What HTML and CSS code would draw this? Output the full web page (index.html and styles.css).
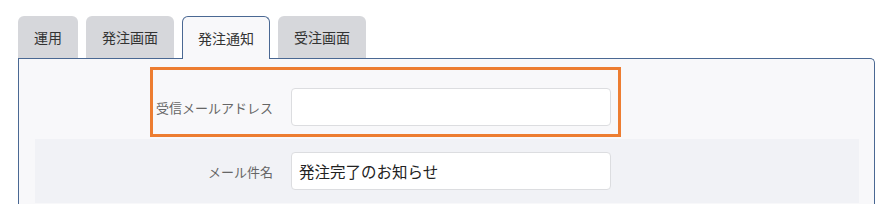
FILE: index.html
```html
<!DOCTYPE html>
<html lang="ja">
<head>
  <meta charset="UTF-8" />
  <title>設定</title>
  <link rel="stylesheet" href="styles.css">
</head>
<body>
  <div class="tabs">
    <div class="tab">運用</div>
    <div class="tab">発注画面</div>
    <div class="tab active">発注通知</div>
    <div class="tab">受注画面</div>
  </div>

  <div class="panel">
    <div class="row">
      <div class="highlight"></div>
      <label class="label">受信メールアドレス</label>
      <input class="field" type="text" value="">
    </div>
    <div class="row alt">
      <label class="label">メール件名</label>
      <input class="field" type="text" value="発注完了のお知らせ">
    </div>
  </div>
</body>
</html>
```

FILE: styles.css
```css
body {
  margin: 0;
  padding: 16px 14px 0 18px;
  background-color: #ffffff;
  font-family: "Noto Sans CJK JP", "Noto Sans", sans-serif;
  color: #333;
  overflow: hidden;
}

.tabs {
  display: flex;
  gap: 8px;
  align-items: flex-end;
}

.tab {
  height: 42px;
  padding: 0 16px;
  display: flex;
  align-items: center;
  font-size: 14px;
  color: #333;
  background-color: #d6d7db;
  border-radius: 6px 6px 0 0;
  box-sizing: border-box;
}

.tab.active {
  background-color: #f8f8fa;
  border: 1px solid #4a6893;
  border-bottom: none;
  height: 43px;
  margin-bottom: -1px;
  padding: 0 15px;
  position: relative;
  z-index: 1;
}

.panel {
  border: 1px solid #4a6893;
  border-bottom: none;
  border-radius: 0 5px 0 0;
  background-color: #f8f8fa;
  padding: 16px 15px 0 16px;
  height: 129px;
}

.row {
  position: relative;
  display: flex;
  align-items: center;
  gap: 18px;
  height: 64px;
}

.row.alt {
  background-color: #f1f2f6;
}

.label {
  width: 238px;
  text-align: right;
  font-size: 13px;
  color: #666;
}

.field {
  width: 320px;
  height: 38px;
  box-sizing: border-box;
  border: 1px solid #dcdde0;
  border-radius: 4px;
  background-color: #fff;
  padding: 0 7px;
  font-family: "Noto Sans CJK JP", sans-serif;
  font-size: 15.5px;
  color: #222;
}

.highlight {
  position: absolute;
  left: 115px;
  top: -8px;
  width: 471px;
  height: 70px;
  border: 3px solid #ed7d31;
  box-sizing: border-box;
  pointer-events: none;
}
```
